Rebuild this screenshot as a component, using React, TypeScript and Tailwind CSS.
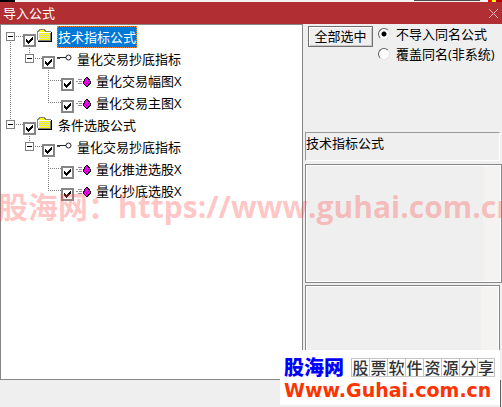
import { useState } from 'react'

type IconKind = 'folder' | 'key' | 'formula'

interface TreeRow {
  id: number
  label: string
  icon: IconKind
  expandable: boolean
  // one entry per indent column, the last one belongs to the row itself
  lines: ('none' | 'through' | 'tee' | 'corner' | 'start')[]
}

const rows: TreeRow[] = [
  { id: 1, label: '技术指标公式', icon: 'folder', expandable: true, lines: ['start'] },
  { id: 2, label: '量化交易抄底指标', icon: 'key', expandable: true, lines: ['through', 'corner'] },
  { id: 3, label: '量化交易幅图X', icon: 'formula', expandable: false, lines: ['through', 'none', 'tee'] },
  { id: 4, label: '量化交易主图X', icon: 'formula', expandable: false, lines: ['through', 'none', 'corner'] },
  { id: 5, label: '条件选股公式', icon: 'folder', expandable: true, lines: ['corner'] },
  { id: 6, label: '量化交易抄底指标', icon: 'key', expandable: true, lines: ['none', 'corner'] },
  { id: 7, label: '量化推进选股X', icon: 'formula', expandable: false, lines: ['none', 'none', 'tee'] },
  { id: 8, label: '量化抄底选股X', icon: 'formula', expandable: false, lines: ['none', 'none', 'corner'] },
]

function Connector({ kind, own, expandable }: { kind: TreeRow['lines'][number]; own: boolean; expandable: boolean }) {
  const top = kind === 'start' ? 10 : 0
  const bottom = kind === 'corner' ? 10 : 22
  return (
    <svg width={own ? 22 : 19} height="22" className="shrink-0" shapeRendering="crispEdges" aria-hidden="true">
      {kind !== 'none' && (
        <path d={`M9.5 ${top}V${bottom}`} stroke="#808080" strokeDasharray="1 1" />
      )}
      {own && <path d="M9 10.5H22" stroke="#808080" strokeDasharray="1 1" />}
      {own && expandable && (
        <>
          <rect x="5.5" y="6.5" width="8" height="8" fill="#fff" stroke="#808080" />
          <path d="M7 10.5h5" stroke="#000" />
        </>
      )}
    </svg>
  )
}

function RowIcon({ kind }: { kind: IconKind }) {
  if (kind === 'folder') {
    return (
      <svg width="16" height="16" className="mb-1 shrink-0" shapeRendering="crispEdges" aria-hidden="true">
        <path d="M1 12V3h1V2h1V1h5v1h1v1h5v9z" fill="#ffff00" />
        <path d="M2 5.5h11M2 7.5h11M2 9.5h11M2 11.5h11" stroke="#d8d8a8" strokeDasharray="1 1" />
        <path d="M2 6.5h11M2 8.5h11M2 10.5h11" stroke="#d8d8a8" strokeDasharray="1 1" strokeDashoffset="1" />
        <path d="M0.5 12V3.5h1v-1h1v-1h5v1h1v1h5V12" fill="none" stroke="#808080" />
        <path d="M1.5 12V4.5h12" fill="none" stroke="#fff" />
        <path d="M14.5 4v9.5H1" fill="none" stroke="#000" />
        <path d="M1 12.5h13" stroke="#808080" />
      </svg>
    )
  }
  if (kind === 'key') {
    return (
      <svg width="16" height="16" className="mb-1 shrink-0" aria-hidden="true">
        <path d="M3 7.5h7" stroke="#222" />
        <rect x="1" y="7" width="3" height="2" fill="#444" />
        <circle cx="12.5" cy="7.5" r="2.5" fill="#fff" stroke="#222" />
      </svg>
    )
  }
  return (
    <svg width="16" height="16" className="mb-1 shrink-0" shapeRendering="crispEdges" aria-hidden="true">
      <path d="M3 7.5h4M1 9.5h2M4 9.5h3M3 11.5h4" stroke="#909090" />
      <path d="M11 5h2v1h1v1h1v2h1v3h-1v1h-1v1h-1v1h-2v-1h-1v-1H9v-1H8V9h1V7h1V6h1z" fill="#000" />
      <path d="M11 6h1v1h1v1h1v1h1v2h-1v1h-1v1h-1v1h-1v-1h-1v-1H9V9h1V7h1z" fill="#ff00ff" />
      <path d="M9 9.5h1M10 10.5h1M11 11.5h1M12 10.5h1M13 9.5h1" stroke="#800080" />
    </svg>
  )
}

function Radio({ label, checked, onChange }: { label: string; checked: boolean; onChange: () => void }) {
  return (
    <label className="flex h-5 items-center gap-1.5 whitespace-nowrap">
      <input
        type="radio"
        name="import-mode"
        checked={checked}
        onChange={onChange}
        className="size-3 shrink-0 appearance-none rounded-full border border-t-[#606060] border-r-[#e4e4e4] border-b-[#e4e4e4] border-l-[#606060] bg-white checked:bg-[radial-gradient(circle,#000_2px,#fff_3px)]"
      />
      {label}
    </label>
  )
}

function TextPane({ className }: { className: string }) {
  return (
    <div className={`flex justify-end border border-[#868686] ${className}`}>
      <div className="flex flex-1 justify-end border border-white">
        <div className="w-[17px] bg-[#f4f3f2]" />
      </div>
    </div>
  )
}

export default function App() {
  const [checked, setChecked] = useState<number[]>(rows.map((r) => r.id))
  const [selected, setSelected] = useState(1)
  const [mode, setMode] = useState<'skip' | 'overwrite'>('skip')

  const toggle = (id: number) => {
    setChecked(checked.includes(id) ? checked.filter((c) => c !== id) : [...checked, id])
  }

  return (
    <main className="relative flex min-h-screen flex-col overflow-hidden bg-[#efefef] font-['Open_Sans','Noto_Sans_CJK_SC',sans-serif] text-[13px] leading-5 text-black">
      {/* Edge of the window behind */}
      <div className="flex h-0.5 bg-[#f4f4f4]">
        <div className="w-[15px] bg-black" />
        <div className="flex-1" />
        <div className="mr-2 h-px w-[66px] bg-[#504848]" />
        <div className="w-1 bg-[#ff0000]" />
        <div className="w-1 bg-[#ffff00]" />
        <div className="w-1.5 bg-[#c00000]" />
      </div>

      <header className="flex h-[22px] items-center justify-between bg-[#b12f32] pr-[3px] pl-[3px] text-white">
        <h1>导入公式</h1>
        <button type="button" aria-label="关闭" className="p-px">
          <svg width="9" height="9" aria-hidden="true">
            <path d="M0 0L9 9M9 0L0 9" stroke="#e8c4c5" />
          </svg>
        </button>
      </header>

      <div className="flex h-[356px]">
        <section className="flex-1 border border-[#868686] bg-white pt-px">
          <ul>
            {rows.map((row) => (
              <li key={row.id} className="flex h-[22px] items-end">
                {row.lines.map((kind, i) => (
                  <Connector key={i} kind={kind} own={i === row.lines.length - 1} expandable={row.expandable} />
                ))}
                <input
                  type="checkbox"
                  aria-label={row.label}
                  checked={checked.includes(row.id)}
                  onChange={() => toggle(row.id)}
                  className="mr-px mb-px size-[13px] shrink-0 appearance-none border-2 border-[#868686] bg-white"
                />
                {checked.includes(row.id) && (
                  <svg width="9" height="9" className="pointer-events-none relative mr-[3px] mb-[3px] -ml-3 shrink-0" shapeRendering="crispEdges" aria-hidden="true">
                    <path d="M1 3h1v1h1v1h1V4h1V3h1V2h1V1h1v3H7v1H6v1H5v1H4v1H3V7H2V6H1z" fill="#000" />
                  </svg>
                )}
                <RowIcon kind={row.icon} />
                <button
                  type="button"
                  onClick={() => setSelected(row.id)}
                  className={`ml-1 h-[22px] px-px whitespace-nowrap ${
                    selected === row.id
                      ? 'bg-[#0078d7] text-white outline outline-dotted -outline-offset-1 outline-[#ff8728]'
                      : ''
                  }`}
                >
                  {row.label}
                </button>
              </li>
            ))}
          </ul>
        </section>

        <section className="flex w-[199px] flex-col pl-0.5">
          <div className="flex h-[108px] items-start gap-[5px] pl-[3px]">
            <button
              type="button"
              onClick={() => setChecked(rows.map((r) => r.id))}
              className="mt-0.5 h-[21px] w-[65px] border border-[#707070] bg-[#efefef] leading-[19px] shadow-[inset_1px_1px_#fff,inset_-1px_-1px_#c8c8c8]"
            >
              全部选中
            </button>
            <div>
              <Radio label="不导入同名公式" checked={mode === 'skip'} onChange={() => setMode('skip')} />
              <Radio label="覆盖同名(非系统)" checked={mode === 'overwrite'} onChange={() => setMode('overwrite')} />
            </div>
          </div>
          <p className="mr-0.5 h-[29px] border border-t-[#999] border-r-white border-b-white border-l-[#999]">
            {rows.find((r) => r.id === selected)?.label}
          </p>
          <TextPane className="mt-[3px] h-[119px]" />
          <TextPane className="mt-0.5 mr-0.5 flex-1" />
        </section>
      </div>
      <footer className="mr-px flex-1 border-r border-[#606060]" />

      {/* Site watermark across the window */}
      <div className="pointer-events-none absolute top-[187px] -left-0.5 text-[30px] leading-[40px] font-bold whitespace-nowrap text-[#ff5a5a]/35">
        股海网：https://www.guhai.com.cn
      </div>

      <aside className="absolute right-0.5 bottom-0.5 h-[55px] w-[220px] bg-white pt-1 pl-1">
        <div className="flex h-[26px] items-center gap-[7px]">
          <strong className="font-['Noto_Sans_CJK_SC',sans-serif] text-[20px] leading-[26px] font-black text-[#0000ff]">股海网</strong>
          <span className="flex font-['Noto_Sans_CJK_SC',sans-serif] text-[16px] leading-[17px] font-medium text-[#333]">
            {'股票软件资源分享'.split('').map((char, i) => (
              <span key={i} className="w-[18px] border border-r-0 border-[#c4c4c4] text-center last:border-r">{char}</span>
            ))}
          </span>
        </div>
        <a href="#" className="block font-['DejaVu_Sans',sans-serif] text-[19px] leading-[20px] font-bold text-[#ff3300]">
          Www.Guhai.com.cn
        </a>
      </aside>
    </main>
  )
}
